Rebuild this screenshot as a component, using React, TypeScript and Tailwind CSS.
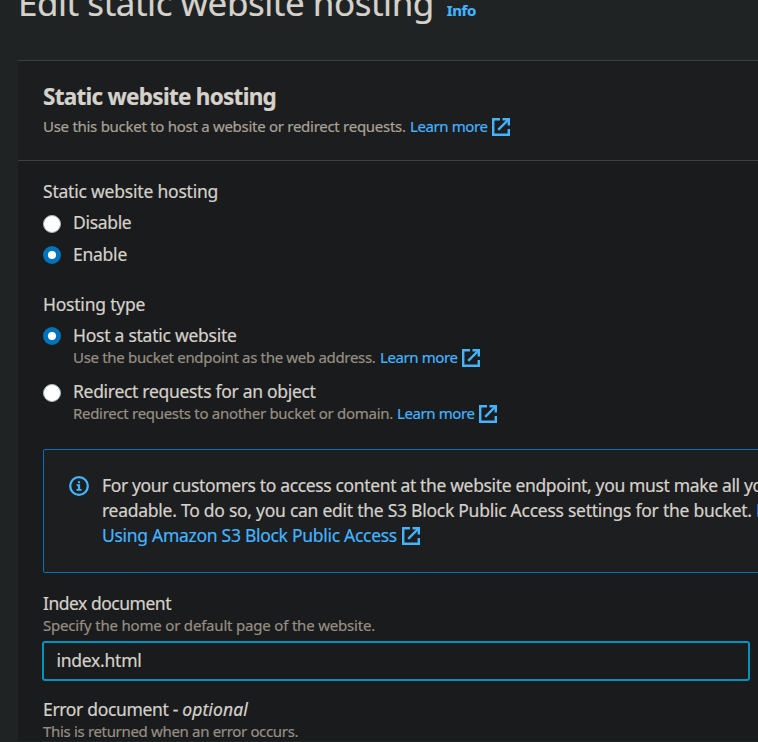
import type { ReactNode } from "react";

function ExternalIcon({ className = "" }: { className?: string }) {
  return (
    <svg
      viewBox="0 0 18 18"
      className={`h-[18px] w-[18px] shrink-0 ${className}`}
      fill="none"
      stroke="#44b4ff"
      strokeWidth="2.4"
    >
      <path d="M8 1.2H1.2V16.8H16.8V11" />
      <path d="M10.5 1.2H16.8V7.5" />
      <path d="M16.5 1.5L6.2 11.8" />
    </svg>
  );
}

function InfoIcon() {
  return (
    <svg viewBox="0 0 20 20" className="mt-[3px] h-5 w-5 shrink-0" fill="none" stroke="#44b4ff">
      <circle cx="10" cy="10" r="8.8" strokeWidth="2.3" />
      <path d="M8.9 5.2H11.1V7.2H8.9Z" fill="#44b4ff" stroke="none" />
      <path d="M7.6 8.3H11.1V13H12.6V14.8H7.4V13H8.9V10.1H7.6Z" fill="#44b4ff" stroke="none" />
    </svg>
  );
}

function Radio({ checked = false }: { checked?: boolean }) {
  return (
    <span
      className={`flex h-[18px] w-[18px] shrink-0 items-center justify-center rounded-full ${
        checked ? "mt-1 bg-[#0073bb]" : "mt-[5px] border border-[#aab7b8] bg-white"
      }`}
    >
      {checked && <span className="h-2 w-2 rounded-full bg-white" />}
    </span>
  );
}

function Option({ checked, label, className }: { checked?: boolean; label: ReactNode; className: string }) {
  return (
    <div className={`flex h-6 gap-3 ${className}`}>
      <Radio checked={checked} />
      {label}
    </div>
  );
}

function LearnMore() {
  return <a className="tracking-[-0.4px] text-[#44b4ff]">Learn more</a>;
}

export default function App() {
  return (
    <div className="h-[742px] w-[758px] overflow-hidden bg-[#1f2324] font-['Noto_Sans',sans-serif] text-[17.5px] leading-6 whitespace-nowrap text-[#d5d1cb] [-webkit-text-stroke:0.2px]">
      <header className="-mt-5 flex h-20 pl-[18px]">
        <h1 className="pt-px text-[35px] leading-[44px] tracking-[-0.48px]">Edit static website hosting</h1>
        <a className="ml-[13px] pt-5 text-[15px] leading-5 font-bold tracking-[-0.4px] text-[#44b4ff]">Info</a>
      </header>

      <main className="ml-[18px] w-[900px] border-t border-[#3c4042] bg-[#1a1b1c]">
        <div className="h-[100px] border-b border-[#3c4042] bg-[#1c1d1e] pt-[22px] pl-[25px]">
          <h2 className="text-[22.5px] leading-7 font-bold tracking-[-0.72px]">Static website hosting</h2>
          <div className="mt-[5px] flex h-5 text-[15px] leading-5 text-[#a9a297]">
            <span className="w-[367px] tracking-[-0.28px]">Use this bucket to host a website or redirect requests.</span>
            <LearnMore />
            <ExternalIcon className="mt-0.5 ml-1" />
          </div>
        </div>

        <div className="pt-[18px] pl-[25px]">
          <p className="tracking-[-0.21px]">Static website hosting</p>
          <Option className="mt-[7px]" label={<span className="tracking-[-0.32px]">Disable</span>} />
          <Option className="mt-2" checked label={<span className="tracking-[-0.25px]">Enable</span>} />

          <p className="mt-[26px] tracking-[-0.22px]">Hosting type</p>
          <Option className="mt-[7px]" checked label={<span className="tracking-[-0.25px]">Host a static website</span>} />
          <div className="flex h-5 pl-[30px] text-[15px] leading-5 text-[#978f83]">
            <span className="w-[307px] tracking-[-0.32px]">Use the bucket endpoint as the web address.</span>
            <LearnMore />
            <ExternalIcon className="mt-0.5 ml-1" />
          </div>
          <Option className="mt-3" label={<span className="tracking-[-0.3px]">Redirect requests for an object</span>} />
          <div className="flex h-5 pl-[30px] text-[15px] leading-5 text-[#978f83]">
            <span className="w-[324px] tracking-[-0.3px]">Redirect requests to another bucket or domain.</span>
            <LearnMore />
            <ExternalIcon className="mt-0.5 ml-1" />
          </div>

          <section className="mt-[26px] flex h-[124px] rounded-[2px] border border-[#0073bb] bg-[#1d1e20] pt-[23px] pl-[25px] leading-[25px]">
            <InfoIcon />
            <div className="ml-[13px]">
              <p className="tracking-[-0.35px]">For your customers to access content at the website endpoint, you must make all your content publicly</p>
              <p className="tracking-[-0.26px]">
                readable. To do so, you can edit the S3 Block Public Access settings for the bucket. <a className="text-[#44b4ff]">Learn more</a>
              </p>
              <a className="flex text-[#44b4ff]">
                <span className="tracking-[-0.29px]">Using Amazon S3 Block Public Access</span>
                <ExternalIcon className="mt-1 ml-[5px]" />
              </a>
            </div>
          </section>

          <p className="mt-[18px] tracking-[-0.48px]">Index document</p>
          <p className="text-[15px] leading-5 tracking-[-0.19px] text-[#978f83]">Specify the home or default page of the website.</p>
          <input
            aria-label="Index document"
            defaultValue="index.html"
            className="mt-1.5 -ml-px block h-10 w-[708px] rounded-[3px] border-2 border-[#0093c0] bg-transparent px-[12.5px] pb-0.5 text-[17.5px] tracking-[-0.25px] outline-none"
          />
          <p className="mt-4 tracking-[-0.33px]">
            Error document - <i className="tracking-[0.1px]">optional</i>
          </p>
          <p className="text-[15px] leading-5 tracking-[-0.33px] text-[#978f83]">This is returned when an error occurs.</p>
        </div>
      </main>
    </div>
  );
}
